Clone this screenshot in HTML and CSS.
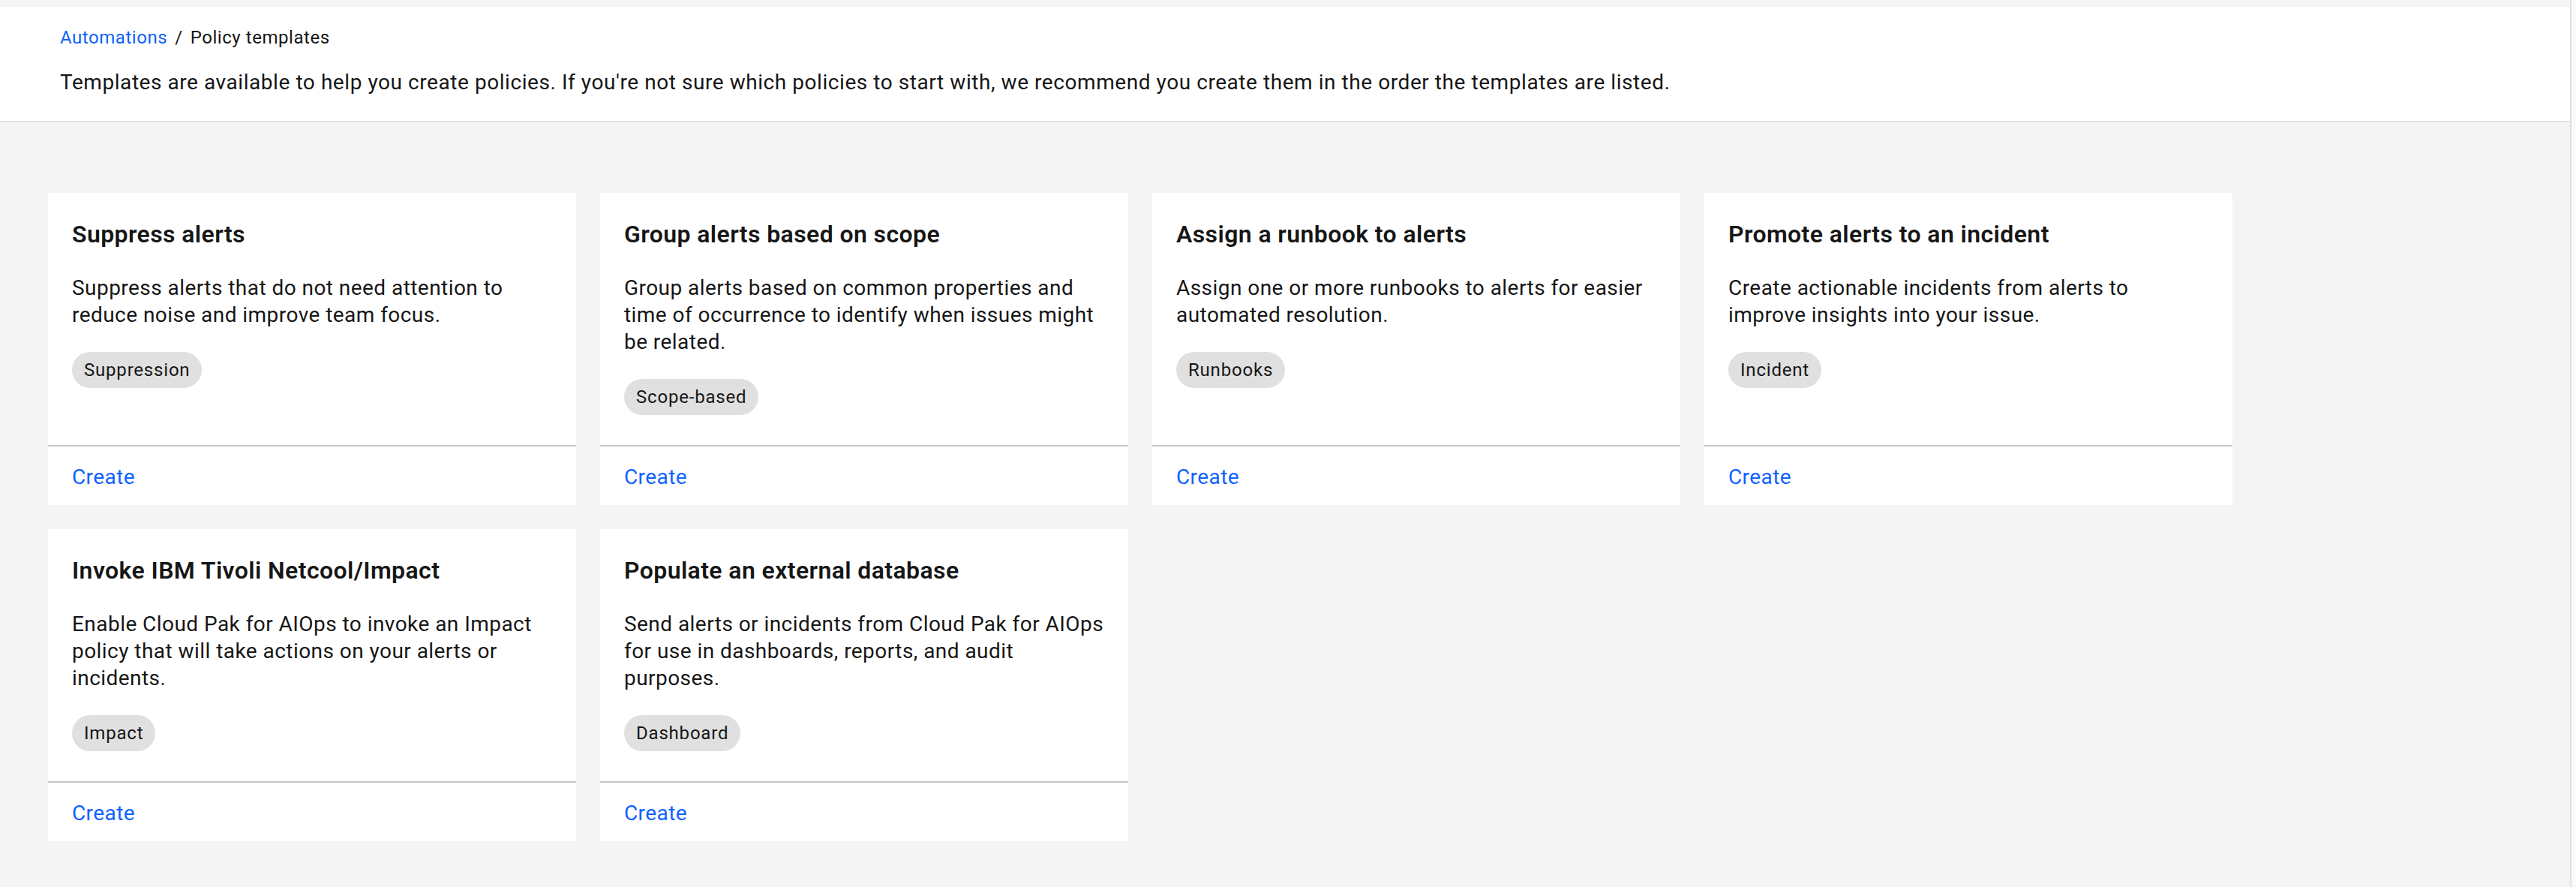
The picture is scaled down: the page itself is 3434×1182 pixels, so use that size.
FILE: index.html
```html
<!DOCTYPE html>
<html lang="en">
<head>
<meta charset="utf-8">
<title>Policy templates</title>
<link rel="stylesheet" href="styles.css">
</head>
<body>
<div class="app">
  <div class="main">
    <header class="page-header">
      <nav class="breadcrumb">
        <a class="crumb-link" href="#">Automations</a><span class="crumb-sep">/</span><span class="crumb-current">Policy templates</span>
      </nav>
      <p class="page-desc">Templates are available to help you create policies. If you're not sure which policies to start with, we recommend you create them in the order the templates are listed.</p>
    </header>
    <section class="grid">
      <article class="card">
        <div class="card-body">
          <h3 class="card-title">Suppress alerts</h3>
          <p class="card-desc">Suppress alerts that do not need attention to<br>reduce noise and improve team focus.</p>
          <span class="tag">Suppression</span>
        </div>
        <div class="card-footer"><a class="card-link" href="#">Create</a></div>
      </article>
      <article class="card">
        <div class="card-body">
          <h3 class="card-title">Group alerts based on scope</h3>
          <p class="card-desc">Group alerts based on common properties and<br>time of occurrence to identify when issues might<br>be related.</p>
          <span class="tag">Scope-based</span>
        </div>
        <div class="card-footer"><a class="card-link" href="#">Create</a></div>
      </article>
      <article class="card">
        <div class="card-body">
          <h3 class="card-title">Assign a runbook to alerts</h3>
          <p class="card-desc">Assign one or more runbooks to alerts for easier<br>automated resolution.</p>
          <span class="tag">Runbooks</span>
        </div>
        <div class="card-footer"><a class="card-link" href="#">Create</a></div>
      </article>
      <article class="card">
        <div class="card-body">
          <h3 class="card-title">Promote alerts to an incident</h3>
          <p class="card-desc">Create actionable incidents from alerts to<br>improve insights into your issue.</p>
          <span class="tag">Incident</span>
        </div>
        <div class="card-footer"><a class="card-link" href="#">Create</a></div>
      </article>
      <article class="card">
        <div class="card-body">
          <h3 class="card-title">Invoke IBM Tivoli Netcool/Impact</h3>
          <p class="card-desc">Enable Cloud Pak for AIOps to invoke an Impact<br>policy that will take actions on your alerts or<br>incidents.</p>
          <span class="tag">Impact</span>
        </div>
        <div class="card-footer"><a class="card-link" href="#">Create</a></div>
      </article>
      <article class="card">
        <div class="card-body">
          <h3 class="card-title">Populate an external database</h3>
          <p class="card-desc">Send alerts or incidents from Cloud Pak for AIOps<br>for use in dashboards, reports, and audit<br>purposes.</p>
          <span class="tag">Dashboard</span>
        </div>
        <div class="card-footer"><a class="card-link" href="#">Create</a></div>
      </article>
    </section>
  </div>
  <div class="rail"></div>
</div>
</body>
</html>
```

FILE: styles.css
```css
* {
  box-sizing: border-box;
}

html, body {
  margin: 0;
  padding: 0;
}

body {
  background: #f4f4f4;
  color: #161616;
  font-family: Roboto, "Liberation Sans", sans-serif;
}

.app {
  display: flex;
  min-height: 100vh;
}

.main {
  flex: 1;
  padding-top: 9px;
  background: #f4f4f4;
}

.rail {
  width: 8px;
  border-left: 2px solid #e0e0e0;
  background: #fafafa;
}

.page-header {
  background: #ffffff;
  border-bottom: 2px solid #e0e0e0;
  padding: 25px 80px 31px;
}

.breadcrumb {
  font-size: 24px;
  line-height: 32px;
  height: 32px;
  display: flex;
  align-items: baseline;
  letter-spacing: 0.55px;
}

.crumb-link {
  color: #0f62fe;
  text-decoration: none;
}

.crumb-sep {
  margin: 0 10px;
  color: #161616;
}

.crumb-current {
  color: #161616;
}

.page-desc {
  margin: 24px 0 0;
  font-size: 28px;
  line-height: 40px;
  letter-spacing: 0.56px;
  color: #161616;
}

.grid {
  display: grid;
  grid-template-columns: repeat(4, 704px);
  column-gap: 32px;
  row-gap: 32px;
  padding: 94px 0 0 64px;
}

.card {
  background: #ffffff;
  display: flex;
  flex-direction: column;
}

.card-body {
  flex: 1;
  padding: 33px 32px 40px;
  display: flex;
  flex-direction: column;
  align-items: flex-start;
}

.card-title {
  margin: 0;
  font-size: 32px;
  line-height: 44px;
  font-weight: 600;
  letter-spacing: 0.4px;
  color: #161616;
}

.card-desc {
  margin: 32px 0 0;
  font-size: 28px;
  line-height: 36px;
  letter-spacing: 0.45px;
  white-space: nowrap;
  color: #161616;
}

.tag {
  margin-top: 31px;
  height: 48px;
  line-height: 48px;
  padding: 0 16px;
  border-radius: 24px;
  background: #e0e0e0;
  color: #161616;
  font-size: 24px;
  letter-spacing: 0.8px;
  white-space: nowrap;
}

.card-footer {
  border-top: 2px solid #c6c6c6;
  padding: 23px 32px 19px;
  font-size: 28px;
  line-height: 36px;
  letter-spacing: 0.4px;
}

.card-link {
  color: #0f62fe;
  text-decoration: none;
}
```
